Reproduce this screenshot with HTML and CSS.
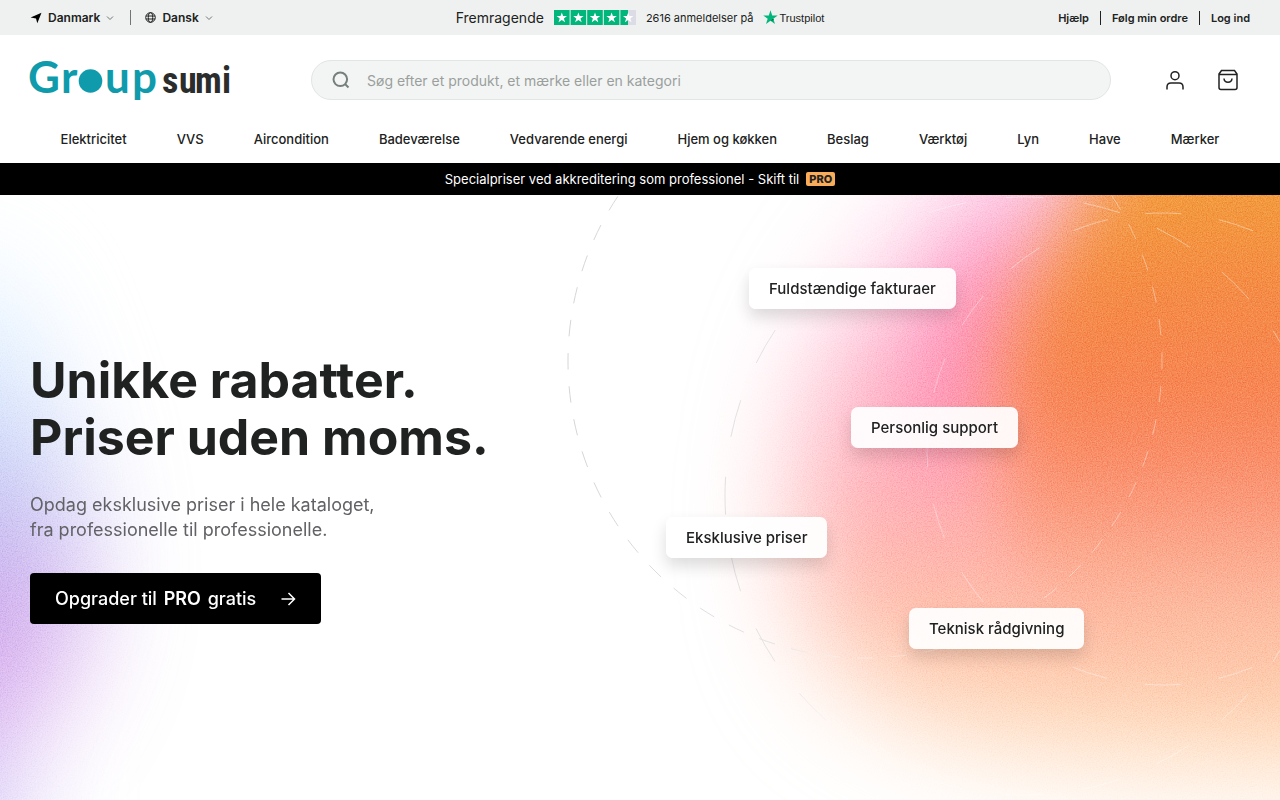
FILE: index.html
```html
<!DOCTYPE html>
<html lang="da">
<head>
    <meta charset="utf-8">
    <meta name="viewport" content="width=device-width, initial-scale=1">
    <title>Groupsumi</title>
    <link rel="stylesheet" href="styles.css">
</head>
<body>
    <div class="topbar">
        <div class="topbar-left">
            <button class="picker" type="button">
                <svg width="12" height="12" viewBox="0 0 12 12"><path d="M11.5.8 7.3 11.2 6 6.6.6 5.4z" fill="#000"/></svg>
                Danmark
                <svg class="chevron" width="8" height="6" viewBox="0 0 8 6"><path d="M1 1.5l3 3 3-3"/></svg>
            </button>
            <button class="picker" type="button">
                <svg class="globe" width="11" height="11" viewBox="0 0 11 11"><circle cx="5.500" cy="5.500" r="4.800"/><ellipse cx="5.500" cy="5.500" rx="2.200" ry="4.800"/><path d="M1 4h9M1 7h9"/></svg>
                Dansk
                <svg class="chevron" width="8" height="6" viewBox="0 0 8 6"><path d="M1 1.500l3 3 3-3"/></svg>
            </button>
        </div>
        <a class="trust" href="#">
            <span class="trust-word">Fremragende</span>
            <svg width="82" height="15" viewBox="0 0 82 15">
                <defs><path id="star" d="M0-5.400 1.300-1.700 5.200-1.700 2.100.7 3.300 4.500 0 2.200-3.300 4.500-2.100.7-5.200-1.700-1.300-1.700z"/></defs>
                <path fill="#00b67a" d="M0 0h15.600v15H0zM16.600 0h15.600v15H16.600zM33.200 0h15.600v15H33.200zM49.800 0h15.600v15H49.800zM66.400 0h7.800v15h-7.800z"/>
                <path fill="#dcdce6" d="M74.200 0H82v15h-7.800z"/>
                <g fill="#fff"><use href="#star" x="7.800" y="7.800"/><use href="#star" x="24.400" y="7.800"/><use href="#star" x="41" y="7.800"/><use href="#star" x="57.600" y="7.800"/><use href="#star" x="74.200" y="7.800"/></g>
            </svg>
            <span class="trust-count">2616 anmeldelser på</span>
            <span class="trust-logo">
                <svg width="15" height="15" viewBox="0 0 15 15"><path fill="#00b67a" d="M7.500.3 9.200 5.500h5.500l-4.400 3.200 1.700 5.200-4.500-3.200L3 13.900l1.700-5.200L.3 5.500h5.500z"/><path fill="#005128" d="M10.700 9.900 10.300 8.700 7.500 10.700z"/></svg>
                Trustpilot
            </span>
        </a>
        <div class="topbar-right">
            <a href="#">Hjælp</a>
            <a href="#">Følg min ordre</a>
            <a href="#">Log ind</a>
        </div>
    </div>

    <header class="header">
        <a class="logo" href="#" aria-label="Groupsumi">
            <svg width="220" height="60" viewBox="-10 -10 220 60">
                <g class="logo-group">
                    <text x="-2" y="33">G</text>
                    <text x="31" y="33">r</text>
                    <circle cx="60.500" cy="21" r="11.800"/>
                    <text x="75" y="33">u</text>
                    <text x="102" y="33">p</text>
                </g>
                <text class="logo-sumi" x="132 149 165 192" y="33">sumi</text>
            </svg>
        </a>
        <form class="search">
            <label for="q" aria-label="Søg">
                <svg width="18" height="18" viewBox="0 0 18 18"><circle cx="8.300" cy="8.300" r="6.800"/><path d="M13 13l3.500 3.500"/></svg>
            </label>
            <input id="q" type="search" placeholder="Søg efter et produkt, et mærke eller en kategori">
        </form>
        <div class="actions">
            <button type="button" aria-label="Konto">
                <svg width="24" height="24" viewBox="0 0 24 24"><circle cx="12" cy="7.700" r="4"/><path d="M4 21.500v-2.500c0-2.500 1.500-4 4-4h8c2.500 0 4 1.500 4 4v2.500"/></svg>
            </button>
            <button type="button" aria-label="Kurv">
                <svg width="24" height="24" viewBox="0 0 24 24"><path d="M3 6l2.500-3.500h13L21 6v13.500a2 2 0 0 1-2 2H5a2 2 0 0 1-2-2zM3 6.500h18M8 10.500c.3 5 7.700 5 8 0"/></svg>
            </button>
        </div>
    </header>

    <nav class="nav">
        <a href="#">Elektricitet</a>
        <a href="#">VVS</a>
        <a href="#">Aircondition</a>
        <a href="#">Badeværelse</a>
        <a href="#">Vedvarende energi</a>
        <a href="#">Hjem og køkken</a>
        <a href="#">Beslag</a>
        <a href="#">Værktøj</a>
        <a href="#">Lyn</a>
        <a href="#">Have</a>
        <a href="#">Mærker</a>
    </nav>

    <a class="promo" href="#">Specialpriser ved akkreditering som professionel - Skift til <b>PRO</b></a>

    <main class="hero">
        <svg class="hero-art" viewBox="0 0 1280 605" preserveAspectRatio="xMidYMin slice" aria-hidden="true">
            <defs>
                <filter id="soft" filterUnits="userSpaceOnUse" x="-400" y="-400" width="2100" height="1500" color-interpolation-filters="sRGB"><feGaussianBlur stdDeviation="54"/></filter>
                <filter id="core" filterUnits="userSpaceOnUse" x="-400" y="-400" width="2100" height="1500" color-interpolation-filters="sRGB"><feGaussianBlur stdDeviation="36"/></filter>
                <filter id="grain" filterUnits="userSpaceOnUse" x="0" y="0" width="1280" height="605" color-interpolation-filters="sRGB">
                    <feTurbulence type="fractalNoise" baseFrequency="0.8" numOctaves="2" seed="4" result="n"/>
                    <feColorMatrix in="n" type="matrix" values="1.5 0 0 0 -.2  1.5 0 0 0 -.2  1.5 0 0 0 -.2  0 0 0 0 .4" result="g"/>
                    <feBlend in="g" in2="SourceGraphic" mode="soft-light"/>
                </filter>
                <linearGradient id="warm" gradientUnits="userSpaceOnUse" x1="0" y1="0" x2="0" y2="605">
                    <stop offset="0" stop-color="#f29b3b"/>
                    <stop offset=".14" stop-color="#f48a42"/>
                    <stop offset=".34" stop-color="#f78352"/>
                    <stop offset=".48" stop-color="#fa9272"/>
                    <stop offset=".62" stop-color="#fcae94"/>
                    <stop offset=".78" stop-color="#fdcbac"/>
                    <stop offset="1" stop-color="#ffdcb6"/>
                </linearGradient>
                <linearGradient id="rose" gradientUnits="userSpaceOnUse" x1="0" y1="0" x2="0" y2="605">
                    <stop offset="0" stop-color="#fdc0e4"/>
                    <stop offset=".3" stop-color="#ffb0c8"/>
                    <stop offset=".58" stop-color="#ffb0ac"/>
                    <stop offset=".7" stop-color="#fec2ac"/>
                    <stop offset=".82" stop-color="#fed0ac"/>
                    <stop offset="1" stop-color="#ffdfbe"/>
                </linearGradient>
                <linearGradient id="cool" gradientUnits="userSpaceOnUse" x1="0" y1="0" x2="0" y2="605">
                    <stop offset="0" stop-color="#f2faff"/>
                    <stop offset=".25" stop-color="#d4ebff"/>
                    <stop offset=".45" stop-color="#bac4f4"/>
                    <stop offset=".58" stop-color="#b6a2ea"/>
                    <stop offset=".75" stop-color="#cc8fe6"/>
                    <stop offset=".86" stop-color="#cfa0ec"/>
                    <stop offset="1" stop-color="#c9bdf4"/>
                </linearGradient>
                <linearGradient id="ring" gradientUnits="userSpaceOnUse" x1="560" y1="0" x2="1000" y2="0">
                    <stop offset="0" stop-color="#d4d4d4"/>
                    <stop offset=".5" stop-color="#e4e4e4"/>
                    <stop offset=".72" stop-color="#fff" stop-opacity=".3"/>
                    <stop offset="1" stop-color="#fff" stop-opacity=".4"/>
                </linearGradient>
            </defs>
            <g filter="url(#grain)">
                <path fill="#fff" d="M0 0h1280v605H0z"/>
                <path filter="url(#soft)" fill="url(#rose)" d="M1080-140C980-20 880 60 835 150C795 240 785 380 825 450C880 540 1000 580 1700 580V-140z"/>
                <ellipse filter="url(#core)" fill="#ff80b0" opacity=".65" cx="970" cy="160" rx="40" ry="130" transform="rotate(16 970 160)"/>
                <path filter="url(#core)" fill="url(#warm)" d="M1160-200C1120-20 1030 50 1000 150C990 220 1000 290 1005 340C1020 400 1080 440 1160 460C1240 480 1300 480 1700 480V-200z"/>
                <path filter="url(#soft)" fill="url(#cool)" opacity=".78" d="M-300 80H0C30 150 60 220 75 300C90 380 90 440 60 490L10 560V900H-300z"/>
            </g>
            <g class="rings">
                <circle cx="865" cy="166" r="297" stroke-dasharray="16.600 16.700" stroke-dashoffset="8.300"/>
                <circle cx="1024" cy="301" r="299" stroke-dasharray="38 40.270" stroke-dashoffset="19"/>
                <circle cx="1163" cy="254" r="236" stroke-dasharray="36 38.140" stroke-dashoffset="18"/>
            </g>
        </svg>

        <div class="hero-copy">
            <h1>Unikke rabatter.<br>Priser uden moms.</h1>
            <p>Opdag eksklusive priser i hele kataloget,<br>fra professionelle til professionelle.</p>
            <a class="cta" href="#">
                <span>Opgrader til <b>PRO</b> gratis</span>
                <svg width="16" height="16" viewBox="0 0 16 16"><path d="M1.500 8h13M8.500 2l6 6-6 6"/></svg>
            </a>
        </div>

        <span class="chip chip-invoices">Fuldstændige fakturaer</span>
        <span class="chip chip-support">Personlig support</span>
        <span class="chip chip-prices">Eksklusive priser</span>
        <span class="chip chip-advice">Teknisk rådgivning</span>
    </main>
</body>
</html>
```
FILE: styles.css
```css
* {
    box-sizing: border-box;
}
body {
    margin: 0;
    background: #fff;
    color: #202221;
    font-family: Inter, "Liberation Sans", sans-serif;
}
a {
    color: inherit;
    text-decoration: none;
}
button {
    padding: 0;
    border: 0;
    background: none;
    color: inherit;
    font: inherit;
    cursor: pointer;
}
svg {
    display: block;
}

/* top bar */
.topbar {
    display: grid;
    grid-template-columns: 1fr auto 1fr;
    align-items: center;
    height: 35px;
    padding: 0 30px;
    background: #eff1f0;
}
.topbar-left,
.topbar-right {
    display: flex;
    align-items: center;
}
.topbar-right {
    justify-content: flex-end;
    font-size: 11px;
    font-weight: 600;
}
.topbar-right a + a {
    margin-left: 11px;
    padding-left: 11px;
    border-left: 1px solid #202221;
}
.picker {
    display: flex;
    align-items: center;
    gap: 6px;
    font-size: 12px;
    font-weight: 600;
}
.picker + .picker {
    margin-left: 16px;
    padding-left: 14px;
    border-left: 1px solid #6f7775;
}
.chevron {
    fill: none;
    stroke: #6f7775;
}
.globe {
    fill: none;
    stroke: #202221;
}
.trust {
    display: flex;
    align-items: center;
    gap: 10px;
}
.trust-word {
    font-size: 14px;
}
.trust-count {
    font-size: 11px;
}
.trust-logo {
    display: flex;
    align-items: center;
    gap: 1px;
    font: 11px "Liberation Sans", sans-serif;
}

/* header */
.header {
    display: flex;
    align-items: center;
    padding: 15px 40px 5px 20px;
}
.logo-group {
    fill: #0f9bab;
    font: bold 44px Lato, sans-serif;
}
.logo-sumi {
    fill: #2b2d2c;
    font: bold 36px "Liberation Sans Narrow", "Roboto Condensed", sans-serif;
}
.search {
    display: flex;
    flex: 1;
    align-items: center;
    gap: 15px;
    height: 40px;
    margin: 0 52px 0 71px;
    padding: 0 20px;
    border: 1px solid #e1e5e4;
    border-radius: 20px;
    background: #f3f5f4;
}
.search svg {
    fill: none;
    stroke: #75807d;
    stroke-width: 2;
}
.search input {
    flex: 1;
    border: 0;
    outline: 0;
    background: none;
    font: 14px Inter, sans-serif;
}
.search input::placeholder {
    color: #9a9f9d;
}
.actions {
    display: flex;
    gap: 29px;
}
.actions svg {
    fill: none;
    stroke: #202221;
    stroke-width: 1.5;
}

.nav {
    display: flex;
    justify-content: center;
    gap: 50px;
    padding: 14px 30px;
    font-size: 13px;
    font-weight: 500;
    line-height: 20px;
}

.promo {
    display: flex;
    align-items: center;
    justify-content: center;
    gap: 7px;
    height: 32px;
    background: #000;
    color: #fff;
    font-size: 13px;
}
.promo b {
    padding: 0 3px;
    border-radius: 2px;
    background: #f9ac5a;
    color: #222;
    font-size: 11px;
    font-weight: 800;
    line-height: 14px;
}

/* hero */
.hero {
    position: relative;
    min-height: calc(100vh - 195px);
    padding: 157px 30px 60px;
    overflow: hidden;
}
.hero-art {
    position: absolute;
    top: 0;
    left: 0;
    width: 100%;
    height: 100%;
}
.rings {
    fill: none;
    stroke: url(#ring);
}
.hero-copy {
    position: relative;
}
.hero h1 {
    margin: 0 0 26px;
    font-size: 50px;
    font-weight: 700;
    line-height: 57px;
}
.hero p {
    margin: 0 0 31px;
    color: #626266;
    font-size: 18px;
    line-height: 25px;
}
.cta {
    display: inline-flex;
    align-items: center;
    gap: 24px;
    height: 51px;
    padding: 0 25px;
    border-radius: 4px;
    background: #000;
    color: #fff;
    font-size: 18px;
    font-weight: 500;
}
.cta b {
    margin: 0 2px;
    font-weight: 600;
}
.cta svg {
    fill: none;
    stroke: #fff;
    stroke-width: 1.5;
}
.chip {
    position: absolute;
    padding: 0 20px;
    border-radius: 7px;
    background: rgba(255, 255, 255, 0.93);
    box-shadow: 0 8px 16px rgba(0, 0, 0, 0.14);
    font-size: 15px;
    font-weight: 500;
    line-height: 41px;
}
.chip-invoices {
    top: 73px;
    left: 749px;
}
.chip-support {
    top: 212px;
    left: 851px;
}
.chip-prices {
    top: 322px;
    left: 666px;
}
.chip-advice {
    top: 413px;
    left: 909px;
}
```
